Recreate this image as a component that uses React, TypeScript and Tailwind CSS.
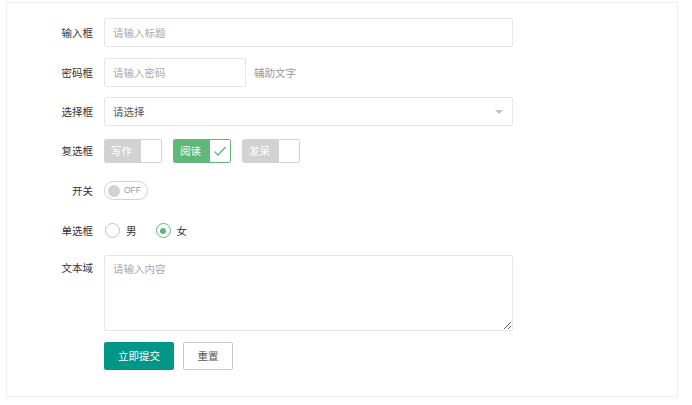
import React from "react";

const font = { fontFamily: '"Noto Sans CJK SC", "Noto Sans", sans-serif' };

function Label({ children }: { children: React.ReactNode }) {
  return (
    <div className="w-[97px] shrink-0 pr-[11px] text-right text-[10.5px] text-[#333]">
      {children}
    </div>
  );
}

function Check({ text, checked }: { text: string; checked?: boolean }) {
  return (
    <div
      className={`flex h-[24px] w-[58px] overflow-hidden rounded-[2px] border ${
        checked ? "border-[#5FB878]" : "border-[#d2d2d2]"
      }`}
    >
      <div
        className={`flex w-[36px] items-center pl-[6px] text-[10.5px] text-white ${
          checked ? "bg-[#5FB878]" : "bg-[#d2d2d2]"
        }`}
      >
        {text}
      </div>
      <div className="flex flex-1 items-center justify-center bg-white">
        {checked && (
          <svg width="14" height="12" viewBox="0 0 14 12">
            <path d="M1.5 6.5 L5 10 L12.5 2" fill="none" stroke="#5FB878" strokeWidth="1.3" />
          </svg>
        )}
      </div>
    </div>
  );
}

export default function App() {
  return (
    <div className="bg-white pl-[6px] pr-[14px] pt-[2px]" style={font}>
      <div className="flex flex-col border border-[#eeeeee] bg-white pb-[26px] pt-[15px]">
        <div className="flex h-[29px] items-center">
          <Label>输入框</Label>
          <div className="flex h-[29px] w-[409px] items-center rounded-[2px] border border-[#e6e6e6] pl-[8px] text-[10.5px] text-[#aaa]">
            请输入标题
          </div>
        </div>
        <div className="mt-[11px] flex h-[29px] items-center">
          <Label>密码框</Label>
          <div className="flex h-[29px] w-[142px] items-center rounded-[2px] border border-[#e6e6e6] pl-[8px] text-[10.5px] text-[#aaa]">
            请输入密码
          </div>
          <div className="pl-[8px] text-[10.5px] text-[#999]">辅助文字</div>
        </div>
        <div className="mt-[10px] flex h-[29px] items-center">
          <Label>选择框</Label>
          <div className="flex h-[29px] w-[409px] items-center justify-between rounded-[2px] border border-[#e6e6e6] pl-[8px] pr-[9px] text-[10.5px] text-[#555]">
            <span>请选择</span>
            <span className="h-0 w-0 border-x-[4px] border-t-[4px] border-x-transparent border-t-[#c2c2c2]" />
          </div>
        </div>
        <div className="mt-[10px] flex h-[29px] items-center">
          <Label>复选框</Label>
          <div className="flex items-center gap-[11px]">
            <Check text="写作" />
            <Check text="阅读" checked />
            <Check text="发呆" />
          </div>
        </div>
        <div className="mt-[11px] flex h-[29px] items-center">
          <Label>开关</Label>
          <div className="flex h-[19px] w-[44px] items-center rounded-full border border-[#d2d2d2] pl-[3px]">
            <span className="h-[12px] w-[12px] rounded-full bg-[#d2d2d2]" />
            <span className="pl-[4px] text-[8.5px] text-[#999]" style={{ fontFamily: '"Liberation Sans", Arial, sans-serif' }}>
              OFF
            </span>
          </div>
        </div>
        <div className="mt-[11px] flex h-[29px] items-center">
          <Label>单选框</Label>
          <div className="flex items-center pl-[1px]">
            <span className="h-[15px] w-[15px] rounded-full border-[1.5px] border-[#c2c2c2]" />
            <span className="pl-[6px] text-[10.5px] text-[#333]">男</span>
            <span className="ml-[19px] flex h-[15px] w-[15px] items-center justify-center rounded-full border-[1.5px] border-[#5FB878]">
              <span className="h-[6px] w-[6px] rounded-full bg-[#5FB878]" />
            </span>
            <span className="pl-[6px] text-[10.5px] text-[#333]">女</span>
          </div>
        </div>
        <div className="mt-[10px] flex items-start">
          <div className="pt-[5px]">
            <Label>文本域</Label>
          </div>
          <textarea
            readOnly
            placeholder="请输入内容"
            className="block h-[76px] w-[409px] rounded-[2px] border border-[#e6e6e6] px-[8px] py-[5px] text-[10.5px] text-[#555] outline-none placeholder:text-[#aaa]"
            style={font}
          />
        </div>
        <div className="mt-[11px] flex items-center pl-[97px]">
          <div className="flex h-[28px] w-[70px] items-center justify-center rounded-[2px] bg-[#009688] text-[10.5px] text-white">
            立即提交
          </div>
          <div className="ml-[9px] flex h-[28px] w-[50px] items-center justify-center rounded-[2px] border border-[#c9c9c9] bg-white text-[10.5px] text-[#555]">
            重置
          </div>
        </div>
      </div>
    </div>
  );
}
